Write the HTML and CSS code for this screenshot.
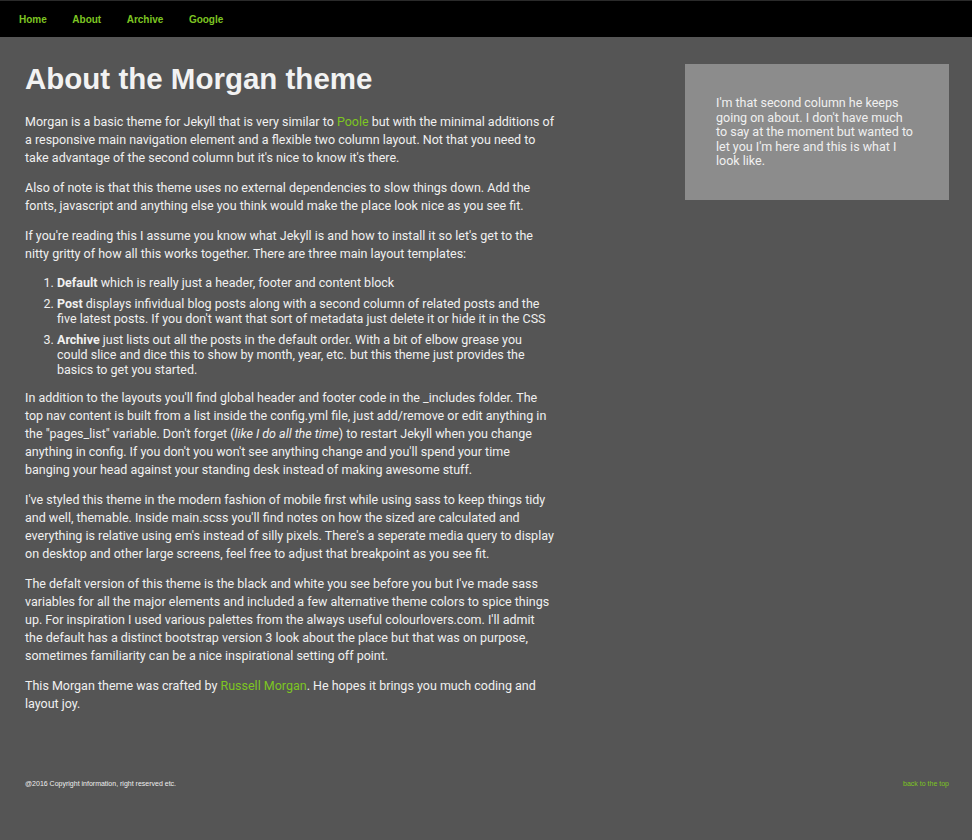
FILE: index.html
```html
<!DOCTYPE html>
<html lang="en">
<head>
<meta charset="utf-8">
<title>About the Morgan theme</title>
<link rel="stylesheet" href="styles.css">
</head>
<body>
<header class="topnav">
  <nav class="nav-list">
    <a href="#" class="nav-link">Home</a>
    <a href="#" class="nav-link">About</a>
    <a href="#" class="nav-link">Archive</a>
    <a href="#" class="nav-link">Google</a>
  </nav>
</header>
<div class="page">
  <div class="layout">
    <main class="main-col">
      <h1 class="title">About the Morgan theme</h1>
      <p>Morgan is a basic theme for Jekyll that is very similar to <a href="#" class="link">Poole</a> but with the minimal additions of a responsive main navigation element and a flexible two column layout. Not that you need to take advantage of the second column but it's nice to know it's there.</p>
      <p>Also of note is that this theme uses no external dependencies to slow things down. Add the fonts, javascript and anything else you think would make the place look nice as you see fit.</p>
      <p>If you're reading this I assume you know what Jekyll is and how to install it so let's get to the nitty gritty of how all this works together. There are three main layout templates:</p>
      <ol class="templates">
        <li><strong>Default</strong> which is really just a header, footer and content block</li>
        <li><strong>Post</strong> displays infividual blog posts along with a second column of related posts and the five latest posts. If you don't want that sort of metadata just delete it or hide it in the CSS</li>
        <li><strong>Archive</strong> just lists out all the posts in the default order. With a bit of elbow grease you could slice and dice this to show by month, year, etc. but this theme just provides the basics to get you started.</li>
      </ol>
      <p>In addition to the layouts you'll find global header and footer code in the _includes folder. The top nav content is built from a list inside the config.yml file, just add/remove or edit anything in the "pages_list" variable. Don't forget (<em>like I do all the time</em>) to restart Jekyll when you change anything in config. If you don't you won't see anything change and you'll spend your time banging your head against your standing desk instead of making awesome stuff.</p>
      <p>I've styled this theme in the modern fashion of mobile first while using sass to keep things tidy and well, themable. Inside main.scss you'll find notes on how the sized are calculated and everything is relative using em's instead of silly pixels. There's a seperate media query to display on desktop and other large screens, feel free to adjust that breakpoint as you see fit.</p>
      <p>The defalt version of this theme is the black and white you see before you but I've made sass variables for all the major elements and included a few alternative theme colors to spice things up. For inspiration I used various palettes from the always useful colourlovers.com. I'll admit the default has a distinct bootstrap version 3 look about the place but that was on purpose, sometimes familiarity can be a nice inspirational setting off point.</p>
      <p>This Morgan theme was crafted by <a href="#" class="link">Russell Morgan</a>. He hopes it brings you much coding and layout joy.</p>
    </main>
    <aside class="side-col">
      <p>I'm that second column he keeps going on about. I don't have much to say at the moment but wanted to let you I'm here and this is what I look like.</p>
    </aside>
  </div>
  <footer class="site-footer">
    <span class="copy">@2016 Copyright information, right reserved etc.</span>
    <a href="#" class="top-link">back to the top</a>
  </footer>
</div>
</body>
</html>
```
FILE: styles.css
```css
html, body {
  margin: 0;
  padding: 0;
}
body {
  background: #555555;
  color: #f0f0f0;
  font-family: Roboto, "Liberation Sans", Arial, sans-serif;
  font-size: 12.5px;
  line-height: 18px;
  min-height: 840px;
}
.topnav {
  background: #000;
  border-top: 1px solid #2a2a2a;
  height: 36px;
}
.nav-list {
  display: flex;
  padding-left: 19px;
}
.nav-link {
  color: #7dc522;
  font-family: "Liberation Sans", Arial, sans-serif;
  font-weight: bold;
  font-size: 10px;
  text-decoration: none;
  line-height: 37px;
  margin-right: 25.5px;
}
.page {
  padding: 26px 23px 0 25px;
}
.layout {
  display: flex;
  justify-content: space-between;
  align-items: flex-start;
}
.main-col {
  width: 530px;
}
.title {
  font-family: "Liberation Sans", Arial, sans-serif;
  font-size: 29.5px;
  line-height: 32px;
  margin: 0 0 18px;
  font-weight: bold;
  color: #f2f2f2;
}
.main-col p {
  margin: 0 0 12px;
}
.link {
  color: #7dc522;
  text-decoration: none;
}
.templates {
  margin: 0 0 12px;
  padding-left: 32px;
  line-height: 15px;
}
.templates li {
  margin-bottom: 6px;
}
.side-col {
  width: 199px;
  background: #8c8c8c;
  padding: 32px 34px 31px 31px;
  line-height: 14.5px;
  margin-top: 1px;
  min-height: 72px;
}
.side-col p {
  margin: 0;
}
.site-footer {
  display: flex;
  justify-content: space-between;
  align-items: center;
  margin-top: 54px;
  font-family: "Liberation Sans", Arial, sans-serif;
  font-size: 7px;
  line-height: 10px;
}
.copy {
  color: #eee;
}
.top-link {
  color: #7dc522;
  text-decoration: none;
}
```
